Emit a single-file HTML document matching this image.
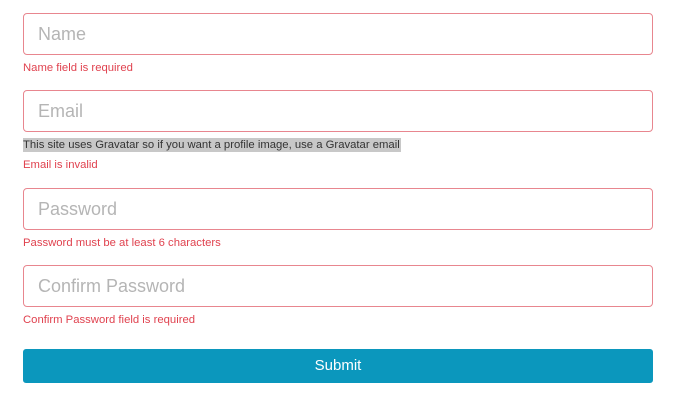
<!DOCTYPE html>
<html><head><style>
body{margin:0;width:673px;height:402px;background:#fff;font-family:"Liberation Sans",Arial,sans-serif;position:relative;overflow:hidden}
.in{position:absolute;left:23px;width:628px;height:40px;border:1px solid #e8868f;border-radius:4px;box-sizing:content-box}
.in span{position:absolute;left:14px;top:10px;font-size:18px;color:#b5b5b5}
.err{position:absolute;left:23px;font-size:11.3px;color:#e0424f;line-height:14px}
.help{position:absolute;left:23px;top:138px;font-size:11.3px;color:#333;background:#c8c8c8;line-height:14px;padding:0 1px 0 0}
.btn{position:absolute;left:23px;top:349px;width:630px;height:34px;background:#0b97bd;border-radius:3px;color:#fff;font-size:15px;text-align:center;line-height:34px}
</style></head><body>
<div class="in" style="top:13px"><span>Name</span></div>
<div class="err" style="top:61px">Name field is required</div>
<div class="in" style="top:90px"><span>Email</span></div>
<div class="help">This site uses Gravatar so if you want a profile image, use a Gravatar email</div>
<div class="err" style="top:158px">Email is invalid</div>
<div class="in" style="top:188px"><span>Password</span></div>
<div class="err" style="top:236px">Password must be at least 6 characters</div>
<div class="in" style="top:265px"><span>Confirm Password</span></div>
<div class="err" style="top:313px">Confirm Password field is required</div>
<div class="btn">Submit</div>
</body></html>
